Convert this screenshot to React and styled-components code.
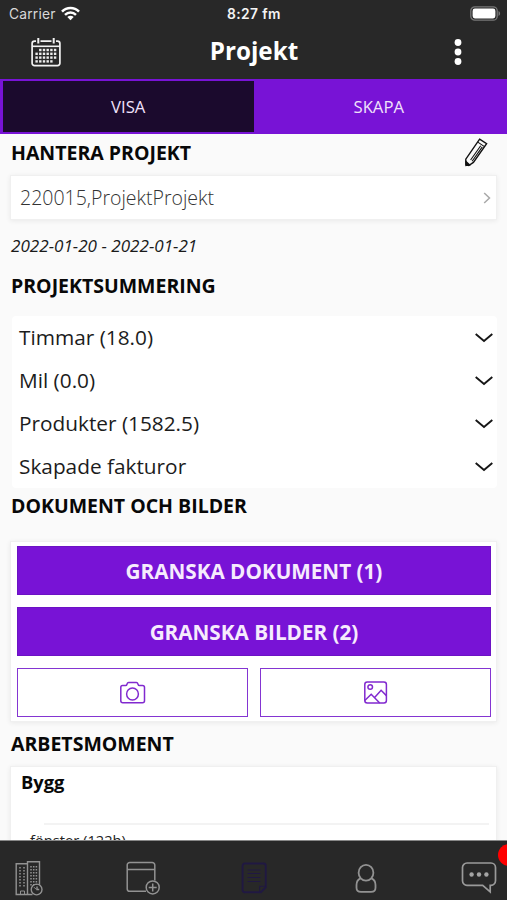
import React, { useState } from "react";
import styled, { createGlobalStyle } from "styled-components";

const summary = ["Timmar (18.0)", "Mil (0.0)", "Produkter (1582.5)", "Skapade fakturor"];

const App = () => {
  const [tab, setTab] = useState("visa");

  return (
    <Screen>
      <GlobalStyle />
      <StatusBar>
        <Carrier>
          <span>Carrier</span>
          <WifiIcon />
        </Carrier>
        <Clock>8:27 fm</Clock>
        <BatteryIcon />
      </StatusBar>
      <Header>
        <CalendarIcon />
        <Title>Projekt</Title>
        <MoreIcon />
      </Header>
      <Tabs>
        <Tab $active={tab === "visa"} onClick={() => setTab("visa")}>
          VISA
        </Tab>
        <Tab $active={tab === "skapa"} onClick={() => setTab("skapa")}>
          SKAPA
        </Tab>
      </Tabs>

      <Content>
        <HeadingRow $height={41} $below={4}>
          <Heading>HANTERA PROJEKT</Heading>
          <PencilIcon />
        </HeadingRow>
        <ProjectSelect>
          <span>220015,ProjektProjekt</span>
          <svg width="8" height="12" viewBox="0 0 8 12" fill="none">
            <path d="M1.2 1 6.5 6l-5.3 5" stroke="#a9a9a9" strokeWidth="1.5" />
          </svg>
        </ProjectSelect>
        <Period>2022-01-20 - 2022-01-21</Period>
        <HeadingRow $height={52} $below={8}>
          <Heading>PROJEKTSUMMERING</Heading>
        </HeadingRow>
        <SummaryList>
          {summary.map((label) => (
            <SummaryRow key={label}>
              <span>{label}</span>
              <svg width="20" height="12" viewBox="0 0 20 12" fill="none">
                <path d="M1.7 3 10 9.900l8.3-6.900" stroke="#161616" strokeWidth="1.9" />
              </svg>
            </SummaryRow>
          ))}
        </SummaryList>
        <HeadingRow $height={53} $below={17}>
          <Heading>DOKUMENT OCH BILDER</Heading>
        </HeadingRow>
        <DocumentCard>
          <ReviewButton>GRANSKA DOKUMENT (1)</ReviewButton>
          <ReviewButton>GRANSKA BILDER (2)</ReviewButton>
          <UploadRow>
            <UploadButton aria-label="Kamera">
              <CameraIcon />
            </UploadButton>
            <UploadButton aria-label="Bild">
              <ImageIcon />
            </UploadButton>
          </UploadRow>
        </DocumentCard>
        <HeadingRow $height={44}>
          <Heading>ARBETSMOMENT</Heading>
        </HeadingRow>
        <WorkCard>
          <WorkTitle>Bygg</WorkTitle>
          <WorkItem>fönster (122h)</WorkItem>
        </WorkCard>
      </Content>

      <Footer>
        <BuildingIcon />
        <AddWindowIcon />
        <NoteIcon />
        <UserIcon />
        <ChatBox>
          <ChatIcon />
          <Badge />
        </ChatBox>
      </Footer>
    </Screen>
  );
};

const WifiIcon = () => (
  <svg width="19" height="15" viewBox="0 0 19 15" fill="none">
    <path d="M1 5.6C5.8.8 13.2.8 18 5.6" stroke="#fff" strokeWidth="2.6" />
    <path d="M4 8.8c3.2-3.1 7.8-3.1 11 0" stroke="#fff" strokeWidth="2.5" />
    <path d="M6.3 11.1c1.8-1.8 4.6-1.8 6.4 0L9.5 14.3z" fill="#fff" />
  </svg>
);

const BatteryIcon = () => (
  <svg width="31" height="15" viewBox="0 0 31 15">
    <rect x="0.8" y="0.8" width="26.4" height="13.4" rx="4" fill="none" stroke="#777" strokeWidth="1.3" />
    <rect x="2.6" y="2.6" width="22.8" height="9.8" rx="2.3" fill="#fff" />
    <path d="M28.5 5v5c1-.4 1.6-1.4 1.6-2.5S29.5 5.4 28.5 5z" fill="#777" />
  </svg>
);

// 4 x 6 days, first and last one left out
const calendarDots = [0, 1, 2, 3]
  .flatMap((r) => [0, 1, 2, 3, 4, 5].map((c) => ({ r, c })))
  .filter(({ r, c }) => !(r === 0 && c === 0) && !(r === 3 && c === 5));

const CalendarIcon = () => (
  <svg width="30" height="30" viewBox="0 0 30 30" fill="none" stroke="#f2f2f2">
    <path
      d="M5 4.2H3.5a2.4 2.4 0 0 0-2.4 2.4v19.6a2.4 2.4 0 0 0 2.4 2.4h23a2.4 2.4 0 0 0 2.4-2.4V6.6a2.4 2.4 0 0 0-2.4-2.4H25M9.5 4.2h11"
      strokeWidth="1.7"
    />
    <path d="M7.3 1v5.6M22.7 1v5.6" strokeWidth="2" />
    <path d="M1 9.3h28" strokeWidth="1.6" />
    {calendarDots.map(({ r, c }) => (
      <rect
        key={`${r}-${c}`}
        x={4.4 + c * 3.7}
        y={11.8 + r * 3.8}
        width="2.4"
        height="2.4"
        fill="#ededed"
        stroke="none"
      />
    ))}
  </svg>
);

const MoreIcon = () => (
  <svg width="8" height="28" viewBox="0 0 8 28" fill="#fff">
    <circle cx="4" cy="4.5" r="3.4" />
    <circle cx="4" cy="14" r="3.4" />
    <circle cx="4" cy="23.5" r="3.4" />
  </svg>
);

const PencilIcon = () => (
  <svg width="24" height="30" viewBox="0 0 24 30" fill="none" stroke="#111" strokeWidth="1.4">
    <path d="M15.6 1.2 22.6 5.6 9.4 24.4 4.8 27.6 2 26.8 1.8 21.2z" />
    <path d="M13.8 4.1 20.5 8.6M6.6 22 16.7 7.8M18.3 8.9 8.1 23.2" strokeWidth="1.1" />
    <path d="m1.9 23.5 3.6 3.3L2 27.5z" fill="#111" />
  </svg>
);

const CameraIcon = () => (
  <svg width="26" height="23" viewBox="0.5 0 26 23" fill="none" stroke="#8129cf" strokeWidth="1.5">
    <path d="M3 4.4h3.2c.7 0 1-.4 1.200-1l.3-.9c.2-.7.7-1.1 1.400-1.1h7.800c.7 0 1.200.4 1.400 1.1l.3.9c.2.6.5 1 1.200 1H23c1.200 0 2 .8 2 2v13.4c0 1.200-.8 2-2 2H3.300c-1.200 0-2-.8-2-2V6.4c0-1.200.5-2 1.700-2z" />
    <circle cx="13" cy="13" r="5.9" />
  </svg>
);

const ImageIcon = () => (
  <svg width="24" height="23" viewBox="0.5 0 24 23" fill="none" stroke="#8129cf" strokeWidth="1.5">
    <rect x="1.3" y="1" width="21.6" height="21" rx="2.5" />
    <circle cx="6.7" cy="6" r="2.3" />
    <path d="m1.300 19.500 6.400-6.300 8.500 8.800M11.100 16.500l6.500-7.200 5.300 5.300" />
  </svg>
);

const BuildingIcon = () => (
  <svg width="28" height="36" viewBox="0 0 28 36" fill="none" stroke="#929292" strokeWidth="1.4">
    <path d="M12.5 34.5H1.2V3.8h11.3M12.5 34.5V1.8h12V25M12.5 34.5h5" />
    <path d="M5 7v21M9 7v21M16 6v20M18.7 6v20M21.4 6v19" strokeDasharray="1.4 1.6" strokeWidth="1.5" />
    <path d="M5.5 34v-3h4v3" strokeWidth="1" />
    <circle cx="21.6" cy="29.5" r="5.4" />
    <path d="M22 26.5v3h2.2" />
    <path d="m19 27.2 2.2 2.200" strokeWidth="1" />
  </svg>
);

const AddWindowIcon = () => (
  <svg width="36" height="34" viewBox="-1.5 0 36 34" fill="none" stroke="#929292" strokeWidth="1.5">
    <path d="M20.5 30.300H4.300a2.600 2.600 0 0 1-2.600-2.600V4a2.600 2.600 0 0 1 2.600-2.600h22.400A2.600 2.600 0 0 1 29.300 4v15.500M1.700 8.500h27.600" />
    <circle cx="27.200" cy="26.400" r="6.500" />
    <path d="M27.200 22.400v8M23.200 26.400h8" />
  </svg>
);

const NoteIcon = () => (
  <svg width="26" height="32" viewBox="0 0 26 32" fill="none" stroke="#201842" strokeWidth="1.9">
    <path d="M3.8 1.500h18.700a2.200 2.200 0 0 1 2.200 2.200v21.700L19.800 30.200h-16A2.200 2.200 0 0 1 1.600 28V3.700a2.200 2.200 0 0 1 2.200-2.200z" />
    <path d="M18.700 30v-5.700h6M6.500 8h13M6.500 11.500h13M6.500 15.500h13M6.500 19.500h13" strokeWidth="1.1" />
  </svg>
);

const UserIcon = () => (
  <svg width="22" height="31" viewBox="0 0 22 31" fill="none" stroke="#929292" strokeWidth="1.8">
    <ellipse cx="11" cy="9.7" rx="7.4" ry="7.9" />
    <path d="M5.5 15.4C2.700 16.600 1.500 18.800 1.500 22v2.700c0 2.900 1.700 4.200 4.500 4.200h10c2.800 0 4.500-1.300 4.500-4.200V22c0-3.200-1.200-5.400-4-6.600" />
  </svg>
);

const ChatIcon = () => (
  <svg width="36" height="34" viewBox="0 0 36 34" fill="none" stroke="#9a9a9a" strokeWidth="1.7">
    <path d="M6 2h24a4.500 4.500 0 0 1 4.500 4.500v13.300a4.500 4.500 0 0 1-4.500 4.500h-.8v6.500l-7.500-6.500H6a4.500 4.500 0 0 1-4.500-4.500V6.500A4.500 4.500 0 0 1 6 2z" />
    <g fill="#a5a5a5" stroke="none">
      <circle cx="10.6" cy="13.5" r="2.2" />
      <circle cx="18" cy="13.5" r="2.2" />
      <circle cx="25.4" cy="13.5" r="2.2" />
    </g>
  </svg>
);

const GlobalStyle = createGlobalStyle`
  body {
    margin: 0;
    background: #fafafa;
    font-family: "Open Sans", "Noto Sans", sans-serif;
  }
  * {
    box-sizing: border-box;
  }
  button {
    font-family: inherit;
    border-radius: 0;
    padding: 0;
  }
  svg {
    display: block;
    flex-shrink: 0;
  }
`;

const Screen = styled.div`
  width: 507px;
  height: 900px;
  display: flex;
  flex-direction: column;
  overflow: hidden;
  background: #fafafa;
`;
const StatusBar = styled.div`
  height: 27px;
  flex-shrink: 0;
  display: grid;
  grid-template-columns: 1fr auto 1fr;
  align-items: center;
  padding: 0 6px 0 9px;
  background: #282828;
  color: #f4f4f4;
  font-family: Inter, "Liberation Sans", sans-serif;
  font-size: 13.8px;

  > svg {
    justify-self: end;
  }
`;
const Carrier = styled.div`
  display: flex;
  align-items: center;
  gap: 5px;
  color: #d8d8d8;
  letter-spacing: 0.2px;
`;
const Clock = styled.div`
  margin-right: 2px;
  font-weight: 600;
  letter-spacing: 0.4px;
`;
const Header = styled.div`
  height: 52px;
  flex-shrink: 0;
  display: grid;
  grid-template-columns: 1fr auto 1fr;
  align-items: center;
  padding: 0 45px 2px 31px;
  background: #282828;

  > svg:last-child {
    justify-self: end;
  }
`;
const Title = styled.h1`
  margin: 0 0 4px 15px;
  color: #fff;
  font-size: 24.2px;
  font-weight: 700;
`;
const Tabs = styled.div`
  height: 55px;
  flex-shrink: 0;
  display: flex;
  padding: 2px 3px;
  background: #7813d6;
`;
const Tab = styled.button`
  flex: 1;
  border: none;
  background: ${({ $active }) => ($active ? "#1b0a2d" : "#7813d6")};
  color: #f0e2fb;
  font-size: 16.7px;
`;
const Content = styled.main`
  flex: 1;
  min-height: 0;
  overflow: hidden;
  padding: 0 10px;
`;
const HeadingRow = styled.div`
  height: ${({ $height }) => $height}px;
  display: flex;
  align-items: center;
  justify-content: space-between;
  padding: 0 9px ${({ $below = 0 }) => $below}px 1px;
`;
const Heading = styled.h2`
  margin: 0;
  color: #080808;
  font-size: 19.5px;
  font-weight: 700;
  line-height: 26px;
`;
const Card = styled.div`
  border: 1px solid #f0f0f0;
  background: #fff;
  box-shadow: 0 1px 5px rgba(0, 0, 0, 0.07);
`;
const ProjectSelect = styled(Card)`
  height: 45px;
  display: flex;
  align-items: center;
  justify-content: space-between;
  padding: 0 5px 0 9px;
  color: #333;
  font-size: 19.5px;
  font-weight: 300;
`;
const Period = styled.div`
  height: 44px;
  padding: 4px 1px 0;
  line-height: 44px;
  color: #1a1a1a;
  font-size: 17.1px;
  font-style: italic;
`;
const SummaryList = styled.div`
  margin: 0 0 0 2px;
  border-radius: 4px;
  background: #fff;
`;
const SummaryRow = styled.div`
  height: 42.9px;
  display: flex;
  align-items: center;
  justify-content: space-between;
  padding: 0 3px 1px 7px;
  color: #1c1c1c;
  font-size: 20.8px;
`;
const DocumentCard = styled(Card)`
  height: 181px;
  display: flex;
  flex-direction: column;
  gap: 12px;
  padding: 4px 5px 4px 6px;
`;
const ReviewButton = styled.button`
  height: 49px;
  padding-top: 1px;
  border: 1px solid #6c12c4;
  background: #7813d6;
  color: #f6ebfd;
  font-size: 20.7px;
  font-weight: 700;
`;
const UploadRow = styled.div`
  display: flex;
  gap: 12px;
`;
const UploadButton = styled.button`
  flex: 1;
  height: 49px;
  display: flex;
  align-items: center;
  justify-content: center;
  border: 1px solid #8435d2;
  background: #fff;
`;
const WorkCard = styled(Card)`
  height: 120px;
  padding: 1px 7px 0 10px;
`;
const WorkTitle = styled.div`
  height: 55px;
  line-height: 27px;
  color: #080808;
  font-size: 18.3px;
  font-weight: 700;
`;
const WorkItem = styled.div`
  padding: 6px 0 0 9px;
  background: linear-gradient(#f3f3f3, #f3f3f3) 23px 0 / 100% 2px no-repeat;
  color: #222;
  font-size: 14.7px;
  line-height: 22px;
`;
const Footer = styled.footer`
  height: 60px;
  flex-shrink: 0;
  display: grid;
  grid-template-columns: repeat(5, 112.4px);
  justify-content: center;
  justify-items: center;
  align-items: center;
  padding: 15px 0 0 1px;
  border-top: 1px solid #888;
  background: #282828;
`;
const ChatBox = styled.div`
  position: relative;
`;
const Badge = styled.span`
  position: absolute;
  top: -17px;
  right: -23px;
  width: 22px;
  height: 22px;
  border-radius: 50%;
  background: #ff0000;
`;

export default App;
